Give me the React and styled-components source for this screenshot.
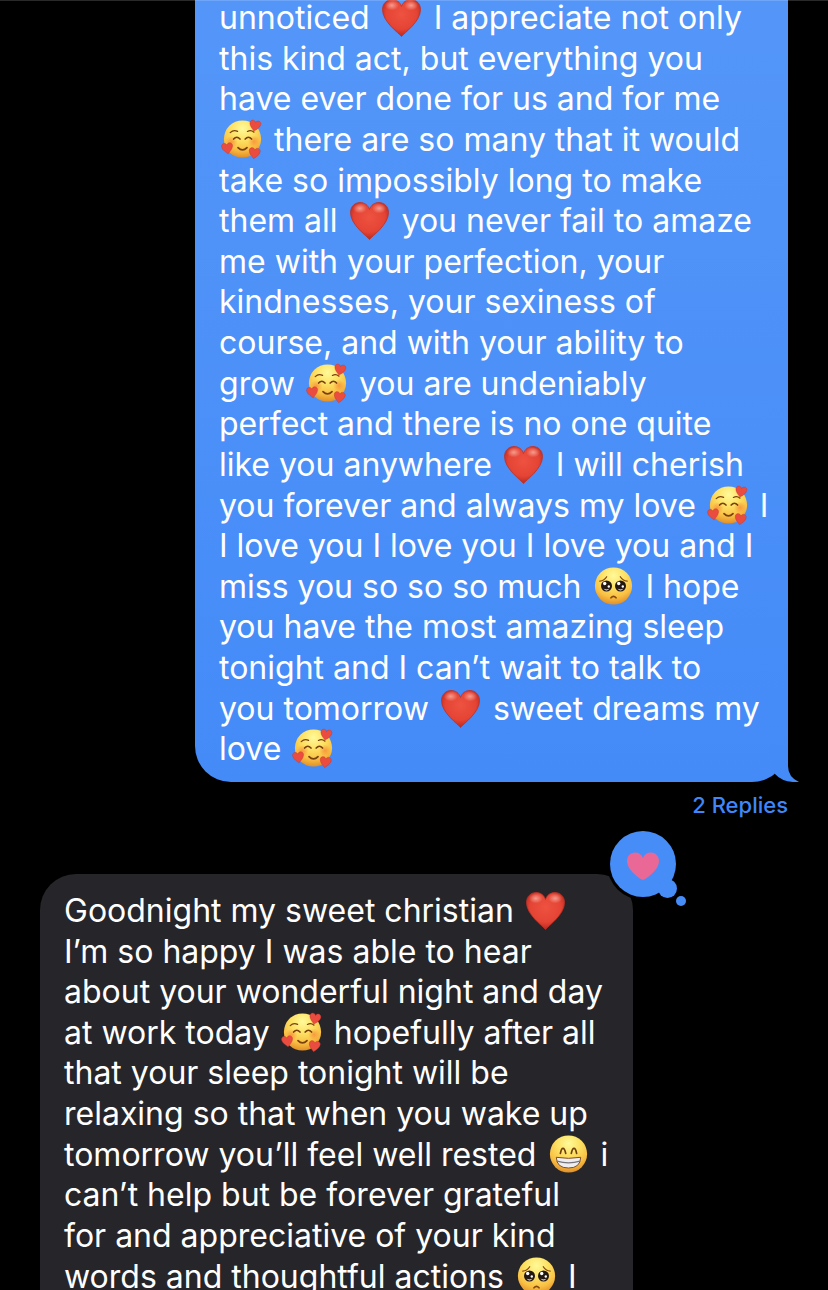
import React from "react";
import styled, { createGlobalStyle, css } from "styled-components";

const GlobalStyle = createGlobalStyle`
  * { box-sizing: border-box; }
  body { margin: 0; background: #000; }
`;

const Screen = styled.main`
  position: relative;
  height: 100vh;
  overflow: hidden;
  background: #000;
  color: #fff;
  font-family: Inter, "Liberation Sans", sans-serif;
`;

const HeaderEdge = styled.div`
  position: absolute;
  inset: 0 0 auto;
  height: 1px;
  background: rgba(255, 255, 255, 0.16);
`;

const Transcript = styled.div`
  display: flex;
  flex-direction: column;
  padding: 0 40px;
`;

const Bubble = styled.article`
  position: relative;
  width: 100%;
  max-width: 593px;
  font-size: 32px;
  line-height: 1.27;
  ${({ $sent }) =>
    $sent
      ? css`
          align-self: flex-end;
          margin-top: -2px;
          padding: 0 24px 12px;
          border-radius: 0 0 36px 36px;
          background: linear-gradient(#5496f8, #448bf8);
        `
      : css`
          align-self: flex-start;
          padding: 17px 24px;
          border-radius: 36px 36px 0 0;
          background: #26252a;
        `}
`;

const Message = styled.p`
  margin: 0;
`;

const Line = styled.span`
  display: block;
  white-space: nowrap;
`;

const EmojiSvg = styled.svg`
  width: 42px;
  height: 42px;
  margin: -4px 2px;
  vertical-align: -5px;
`;

const Tail = styled.svg`
  position: absolute;
  right: -11px;
  bottom: 0;
  width: 30px;
  height: 50px;
`;

const Replies = styled.button`
  align-self: flex-end;
  margin: 9px 0 55px;
  padding: 0;
  border: 0;
  background: none;
  color: #3f87f8;
  font: 500 22px/28px Inter, "Liberation Sans", sans-serif;
`;

const Reaction = styled.button`
  position: absolute;
  top: -47px;
  right: -57px;
  width: 84px;
  height: 84px;
  padding: 0;
  border: 0;
  background: none;

  svg { display: block; }
`;

const GradientDefs = styled.svg`
  display: block;
  width: 0;
  height: 0;
`;

const HEART =
  "M20.5 40.5C18 37 1.5 26 1.5 13.5C1.5 7.5 6 3.5 11 3.5C15.5 3.5 19 6 20.5 10.5C22 6 25.5 3.5 30 3.5C35 3.5 39.5 7.5 39.5 13.5C39.5 26 23 37 20.5 40.5Z";

function Gradients() {
  return (
    <GradientDefs aria-hidden="true">
      <defs>
        <radialGradient id="skin" cx="50%" cy="22%" r="80%">
          <stop offset="0" stopColor="#fffa9a" />
          <stop offset="0.4" stopColor="#fde062" />
          <stop offset="0.72" stopColor="#f9c044" />
          <stop offset="1" stopColor="#e08a24" />
        </radialGradient>
        <radialGradient id="heart" cx="50%" cy="40%" r="62%">
          <stop offset="0" stopColor="#ee5240" />
          <stop offset="0.65" stopColor="#e44434" />
          <stop offset="1" stopColor="#b5251c" />
        </radialGradient>
        <radialGradient id="gloss">
          <stop offset="0" stopColor="#ffc9bd" stopOpacity="0.65" />
          <stop offset="1" stopColor="#ffc9bd" stopOpacity="0" />
        </radialGradient>
        <radialGradient id="blush">
          <stop offset="0" stopColor="#f4702e" stopOpacity="0.55" />
          <stop offset="1" stopColor="#f4702e" stopOpacity="0" />
        </radialGradient>
      </defs>
    </GradientDefs>
  );
}

function Heart() {
  return (
    <EmojiSvg viewBox="0 0 42 42" role="img" aria-label="red heart">
      <path d={HEART} fill="url(#heart)" stroke="#bd3025" strokeWidth="0.8" />
      <ellipse cx="10.8" cy="9.4" rx="7" ry="5" fill="url(#gloss)" />
      <ellipse cx="30.2" cy="9.4" rx="7" ry="5" fill="url(#gloss)" />
    </EmojiSvg>
  );
}

function Face({ label, children }) {
  return (
    <EmojiSvg viewBox="0 0 42 42" role="img" aria-label={label}>
      <circle cx="21.5" cy="21" r="18.6" fill="url(#skin)" />
      {children}
    </EmojiSvg>
  );
}

function Loving() {
  return (
    <Face label="smiling face with hearts">
      <circle cx="10.5" cy="24" r="6" fill="url(#blush)" />
      <circle cx="33" cy="23.5" r="6" fill="url(#blush)" />
      <g fill="none" stroke="#79400f" strokeLinecap="round">
        <path d="M9.2 14.6Q12.5 11.4 16.6 13.4M26.4 13.4Q30 11.4 33 14.2" strokeWidth="1.2" />
        <path d="M12.6 21.1Q15.8 17.4 19 21.1M24.2 21.1Q27.4 17.4 30.6 21.1" strokeWidth="1.6" />
        <path d="M17 29.6Q21.5 34.3 26 29.6" strokeWidth="1.7" />
      </g>
      <g fill="#ea4d40" stroke="#c93229" strokeWidth="1.4">
        <path d={HEART} transform="translate(29.2 .6) rotate(10) scale(.29)" />
        <path d={HEART} transform="translate(-.4 25) rotate(-8) scale(.29)" />
        <path d={HEART} transform="translate(28.4 28.2) rotate(8) scale(.29)" />
      </g>
    </Face>
  );
}

function Pleading() {
  return (
    <Face label="pleading face">
      <g fill="none" stroke="#85480f" strokeWidth="1.2" strokeLinecap="round">
        <path d="M7.8 16.2Q12.5 15.4 14.7 11.7M28.3 11.7Q30.5 15.4 35.2 16.2" />
        <path d="M19 32.8Q21.5 30 24 32.8" strokeWidth="1.7" />
      </g>
      <circle cx="14.5" cy="21" r="5.5" fill="#231712" />
      <circle cx="28.5" cy="21" r="5.5" fill="#231712" />
      <g fill="#fff">
        <circle cx="12.7" cy="18.5" r="1.7" />
        <circle cx="16.8" cy="21.5" r="1.2" />
        <circle cx="26.7" cy="18.5" r="1.7" />
        <circle cx="30.8" cy="21.5" r="1.2" />
        <path d="M11.5 23.6Q14.5 25.4 17.5 23.6Q14.5 27.4 11.5 23.6Z" />
        <path d="M25.5 23.6Q28.5 25.4 31.5 23.6Q28.5 27.4 25.5 23.6Z" />
      </g>
    </Face>
  );
}

function Beaming() {
  return (
    <Face label="beaming face">
      <path
        d="M13.4 20.3Q14.3 15.3 16 15.3Q17.7 15.3 18.7 20.3M24.3 20.3Q25.3 15.3 27 15.3Q28.7 15.3 29.6 20.3"
        fill="none"
        stroke="#70400f"
        strokeWidth="1.7"
        strokeLinecap="round"
      />
      <path
        d="M9.3 24.3Q21.5 26.4 33.7 24.3Q33.5 35 21.5 35Q9.5 35 9.3 24.3Z"
        fill="#eeedf0"
        stroke="#805027"
        strokeWidth="1"
      />
      <path d="M10 28.2Q21.5 31.4 33 28.2" fill="none" stroke="#77747b" strokeWidth="1.3" />
    </Face>
  );
}

const EMOJI = { "❤️": Heart, "🥰": Loving, "🥺": Pleading, "😁": Beaming };

function RichLine({ text }) {
  return (
    <Line>
      {text.split(/(❤️|🥰|🥺|😁)/u).map((part, index) => {
        const Emoji = EMOJI[part];
        return Emoji ? <Emoji key={index} /> : part;
      })}
    </Line>
  );
}

const SENT = [
  "unnoticed ❤️ I appreciate not only",
  "this kind act, but everything you",
  "have ever done for us and for me",
  "🥰 there are so many that it would",
  "take so impossibly long to make",
  "them all ❤️ you never fail to amaze",
  "me with your perfection, your",
  "kindnesses, your sexiness of",
  "course, and with your ability to",
  "grow 🥰 you are undeniably",
  "perfect and there is no one quite",
  "like you anywhere ❤️ I will cherish",
  "you forever and always my love 🥰 I",
  "I love you I love you I love you and I",
  "miss you so so so much 🥺 I hope",
  "you have the most amazing sleep",
  "tonight and I can’t wait to talk to",
  "you tomorrow ❤️ sweet dreams my",
  "love 🥰",
];

const RECEIVED = [
  "Goodnight my sweet christian ❤️",
  "I’m so happy I was able to hear",
  "about your wonderful night and day",
  "at work today 🥰 hopefully after all",
  "that your sleep tonight will be",
  "relaxing so that when you wake up",
  "tomorrow you’ll feel well rested 😁 i",
  "can’t help but be forever grateful",
  "for and appreciative of your kind",
  "words and thoughtful actions 🥺 I",
];

export default function App() {
  return (
    <Screen>
      <GlobalStyle />
      <Gradients />
      <Transcript>
        <Bubble $sent>
          <Message>
            {SENT.map((text) => <RichLine key={text} text={text} />)}
          </Message>
          <Tail viewBox="0 0 30 50" aria-hidden="true">
            <path d="M0 14H19V34Q19 45 30 50Q14 51 6 42Z" fill="#448bf8" />
          </Tail>
        </Bubble>
        <Replies type="button">2 Replies</Replies>
        <Bubble>
          <Message>
            {RECEIVED.map((text) => <RichLine key={text} text={text} />)}
          </Message>
          <Reaction type="button" aria-label="Loved">
            <svg width="84" height="84" viewBox="0 0 84 84" aria-hidden="true">
              <g fill="#000">
                <circle cx="37" cy="37" r="36" />
                <circle cx="61.5" cy="61.5" r="12.5" />
              </g>
              <g fill="#468df8">
                <circle cx="37" cy="37" r="33" />
                <circle cx="61.5" cy="61.5" r="9.5" />
                <circle cx="75" cy="74" r="5" />
              </g>
              <path
                d="M37 53C34 52 21 43 21 34C21 29 24.5 25.5 29 25.5C33 25.5 35.8 27.5 37 31C38.2 27.5 41 25.5 45 25.5C49.5 25.5 53 29 53 34C53 43 40 52 37 53Z"
                fill="#ea6896"
              />
            </svg>
          </Reaction>
        </Bubble>
      </Transcript>
      <HeaderEdge />
    </Screen>
  );
}
